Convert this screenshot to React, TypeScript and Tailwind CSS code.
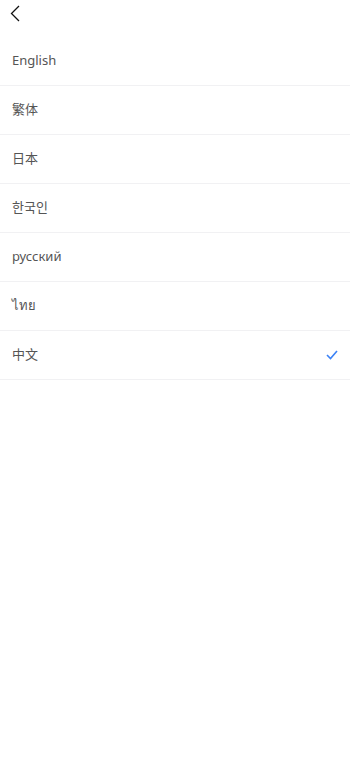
const languages = [
  { label: "English", active: false },
  { label: "繁体", active: false },
  { label: "日本", active: false },
  { label: "한국인", active: false },
  { label: "русский", active: false },
  { label: "ไทย", active: false },
  { label: "中文", active: true },
];

function BackIcon() {
  return (
    <svg width="10" height="17" viewBox="0 0 10 17" fill="none">
      <path d="M9 1L1.5 8.5L9 16" stroke="#111" strokeWidth="1.3" />
    </svg>
  );
}

function CheckIcon() {
  return (
    <svg width="12" height="10" viewBox="0 0 12 10" fill="none">
      <path d="M1 5L4.5 8.5L11 1" stroke="#3b82f6" strokeWidth="1.6" />
    </svg>
  );
}

export default function App() {
  return (
    <div className="min-h-screen w-full bg-white font-['Noto_Sans','Noto_Sans_CJK_SC',sans-serif]">
      <header className="flex h-[37px] items-start pl-[10px] pt-[5px]">
        <button className="flex items-center">
          <BackIcon />
        </button>
      </header>

      <ul>
        {languages.map((lang) => (
          <li
            key={lang.label}
            className="flex h-[49px] items-center justify-between border-b border-[#f1f1f3] pl-3 pr-[12px]"
          >
            <span className="text-[13px] text-[#555]">{lang.label}</span>
            {lang.active && <CheckIcon />}
          </li>
        ))}
      </ul>
    </div>
  );
}
